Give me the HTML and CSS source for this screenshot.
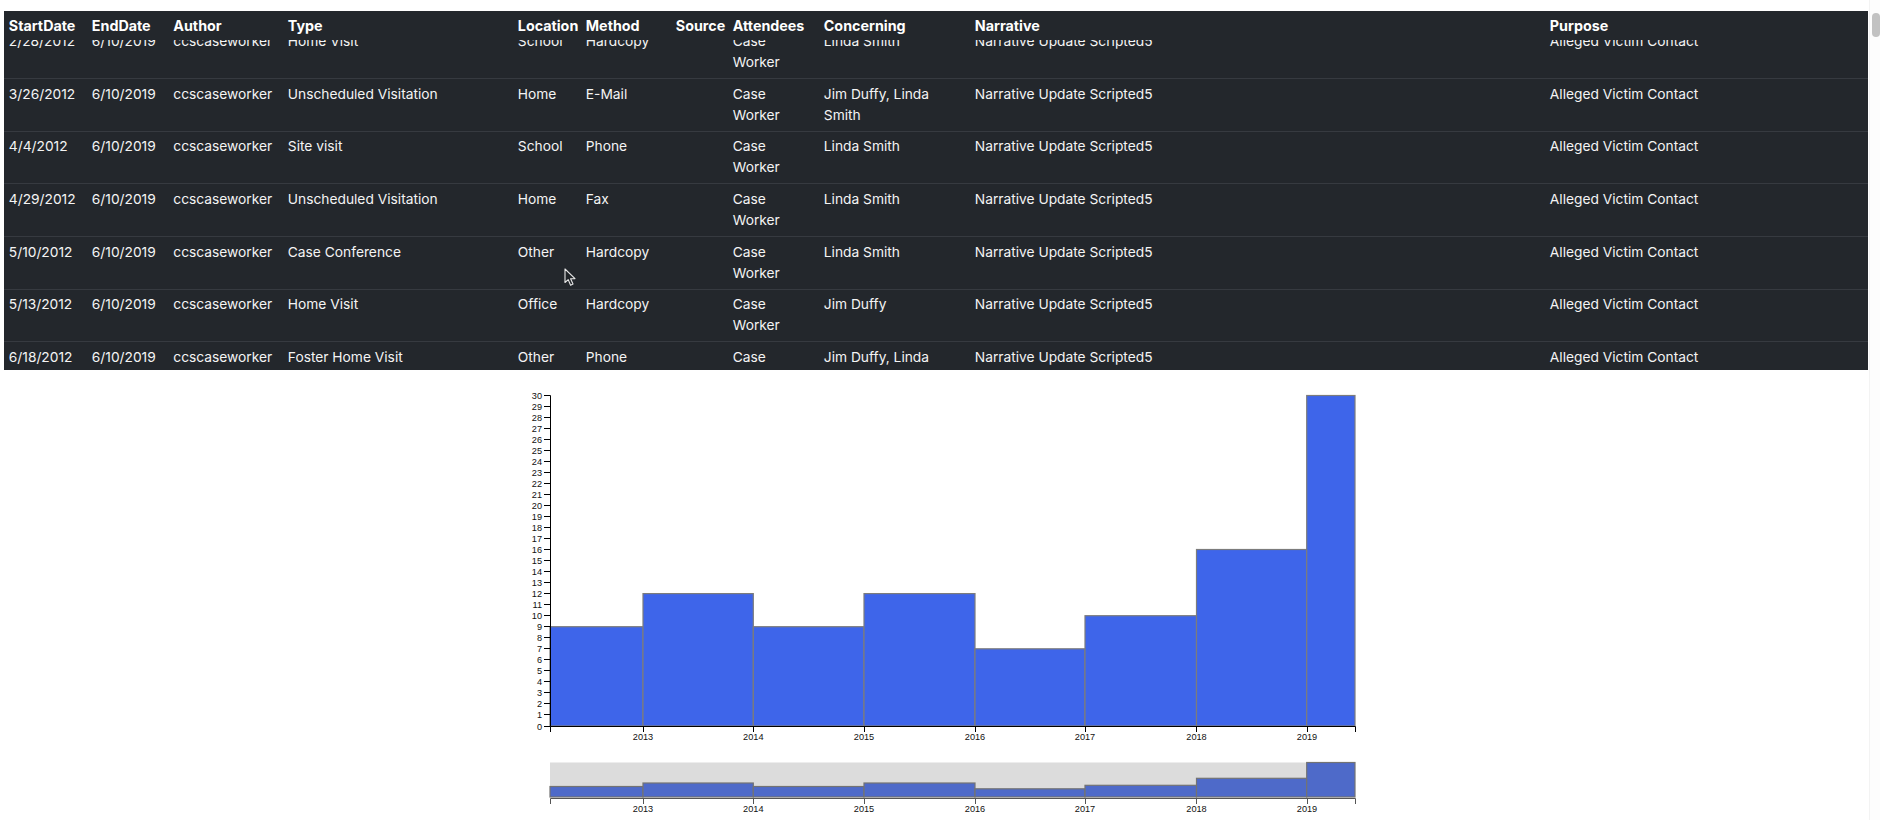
FILE: index.html
```html
<!DOCTYPE html>
<html lang="en">
<head>
<meta charset="utf-8">
<title>Contacts</title>
<link rel="stylesheet" href="styles.css">
</head>
<body>
<div class="scroll-track"><div class="scroll-thumb"></div></div>
<section class="grid-panel">
  <table class="grid head">
    <colgroup><col class="c1"><col class="c2"><col class="c3"><col class="c4"><col class="c5"><col class="c6"><col class="c7"><col class="c8"><col class="c9"><col class="c10"><col class="c11"></colgroup>
    <thead>
      <tr><th>StartDate</th><th>EndDate</th><th>Author</th><th>Type</th><th>Location</th><th>Method</th><th>Source</th><th>Attendees</th><th>Concerning</th><th>Narrative</th><th>Purpose</th></tr>
    </thead>
  </table>
  <div class="viewport">
    <table class="grid body">
      <colgroup><col class="c1"><col class="c2"><col class="c3"><col class="c4"><col class="c5"><col class="c6"><col class="c7"><col class="c8"><col class="c9"><col class="c10"><col class="c11"></colgroup>
      <tbody>
        <tr><td>2/28/2012</td><td>6/10/2019</td><td>ccscaseworker</td><td>Home Visit</td><td>School</td><td>Hardcopy</td><td></td><td>Case Worker</td><td>Linda Smith</td><td>Narrative Update Scripted5</td><td>Alleged Victim Contact</td></tr>
        <tr><td>3/26/2012</td><td>6/10/2019</td><td>ccscaseworker</td><td>Unscheduled Visitation</td><td>Home</td><td>E-Mail</td><td></td><td>Case Worker</td><td>Jim Duffy, Linda Smith</td><td>Narrative Update Scripted5</td><td>Alleged Victim Contact</td></tr>
        <tr><td>4/4/2012</td><td>6/10/2019</td><td>ccscaseworker</td><td>Site visit</td><td>School</td><td>Phone</td><td></td><td>Case Worker</td><td>Linda Smith</td><td>Narrative Update Scripted5</td><td>Alleged Victim Contact</td></tr>
        <tr><td>4/29/2012</td><td>6/10/2019</td><td>ccscaseworker</td><td>Unscheduled Visitation</td><td>Home</td><td>Fax</td><td></td><td>Case Worker</td><td>Linda Smith</td><td>Narrative Update Scripted5</td><td>Alleged Victim Contact</td></tr>
        <tr><td>5/10/2012</td><td>6/10/2019</td><td>ccscaseworker</td><td>Case Conference</td><td>Other</td><td>Hardcopy</td><td></td><td>Case Worker</td><td>Linda Smith</td><td>Narrative Update Scripted5</td><td>Alleged Victim Contact</td></tr>
        <tr><td>5/13/2012</td><td>6/10/2019</td><td>ccscaseworker</td><td>Home Visit</td><td>Office</td><td>Hardcopy</td><td></td><td>Case Worker</td><td>Jim Duffy</td><td>Narrative Update Scripted5</td><td>Alleged Victim Contact</td></tr>
        <tr><td>6/18/2012</td><td>6/10/2019</td><td>ccscaseworker</td><td>Foster Home Visit</td><td>Other</td><td>Phone</td><td></td><td>Case Worker</td><td>Jim Duffy, Linda Smith</td><td>Narrative Update Scripted5</td><td>Alleged Victim Contact</td></tr>
      </tbody>
    </table>
  </div>
  <svg class="cursor" width="13" height="19" viewBox="0 0 13 19" aria-hidden="true">
    <path d="M1 1 L1 14.5 L4.2 11.6 L6.6 17.2 L9 16.1 L6.6 10.8 L11 10.6 Z" fill="#212529" stroke="#e8e8e8" stroke-width="1.1" stroke-linejoin="round"/>
  </svg>
</section>
<section class="chart-area">
  <svg class="chart" width="900" height="450" viewBox="486 370 900 450" role="img" aria-label="Contacts per year">
    <g class="bars">
      <rect x="550" y="626.7" width="93" height="99.3"/>
      <rect x="643" y="593.6" width="110.3" height="132.4"/>
      <rect x="753.3" y="626.7" width="110.7" height="99.3"/>
      <rect x="864" y="593.6" width="111" height="132.4"/>
      <rect x="975" y="648.8" width="110" height="77.2"/>
      <rect x="1085" y="615.7" width="111.5" height="110.3"/>
      <rect x="1196.5" y="549.5" width="110.2" height="176.5"/>
      <rect x="1306.7" y="395.5" width="48.3" height="330.5"/>
    </g>
    <g class="axis">
      <path d="M544 395.5H550.5V726.5H544"/>
      <path d="M544 406.5h6M544 417.5h6M544 428.5h6M544 439.5h6M544 450.5h6M544 461.5h6M544 472.5h6M544 483.5h6M544 494.5h6M544 505.5h6M544 516.5h6M544 527.5h6M544 538.5h6M544 549.5h6M544 560.5h6M544 571.5h6M544 582.5h6M544 593.5h6M544 604.5h6M544 615.5h6M544 626.5h6M544 637.5h6M544 648.5h6M544 659.5h6M544 670.5h6M544 681.5h6M544 692.5h6M544 703.5h6M544 714.5h6"/>
      <path d="M550.5 732V726.5H1355.5V732"/>
      <path d="M643.5 726v6M753.5 726v6M864.5 726v6M975.5 726v6M1085.5 726v6M1196.5 726v6M1307.5 726v6"/>
    </g>
    <g class="ylabels">
      <text x="542" y="398.5">30</text><text x="542" y="409.5">29</text><text x="542" y="420.5">28</text><text x="542" y="431.5">27</text><text x="542" y="442.5">26</text><text x="542" y="453.5">25</text><text x="542" y="464.5">24</text><text x="542" y="475.5">23</text><text x="542" y="486.5">22</text><text x="542" y="497.5">21</text><text x="542" y="508.5">20</text><text x="542" y="519.5">19</text><text x="542" y="530.5">18</text><text x="542" y="541.5">17</text><text x="542" y="552.5">16</text><text x="542" y="563.5">15</text><text x="542" y="574.5">14</text><text x="542" y="585.5">13</text><text x="542" y="596.5">12</text><text x="542" y="607.5">11</text><text x="542" y="618.5">10</text><text x="542" y="629.5">9</text><text x="542" y="640.5">8</text><text x="542" y="651.5">7</text><text x="542" y="662.5">6</text><text x="542" y="673.5">5</text><text x="542" y="684.5">4</text><text x="542" y="695.5">3</text><text x="542" y="706.5">2</text><text x="542" y="717.5">1</text><text x="542" y="729.5">0</text>
    </g>
    <g class="xlabels">
      <text x="643" y="740">2013</text><text x="753.3" y="740">2014</text><text x="864" y="740">2015</text><text x="975" y="740">2016</text><text x="1085" y="740">2017</text><text x="1196.5" y="740">2018</text><text x="1307" y="740">2019</text>
    </g>
    <rect class="brush" x="550" y="762.5" width="805" height="34.5"/>
    <g class="bars mini">
      <rect x="550" y="786.5" width="93" height="10.5"/>
      <rect x="643" y="783" width="110.3" height="14"/>
      <rect x="753.3" y="786.5" width="110.7" height="10.5"/>
      <rect x="864" y="783" width="111" height="14"/>
      <rect x="975" y="788.8" width="110" height="8.2"/>
      <rect x="1085" y="785.3" width="111.5" height="11.7"/>
      <rect x="1196.5" y="778.3" width="110.2" height="18.7"/>
      <rect x="1306.7" y="762.5" width="48.3" height="34.5"/>
    </g>
    <g class="axis soft">
      <path d="M550.5 804V798.5H1355.5V804"/>
      <path d="M643.5 798v6M753.5 798v6M864.5 798v6M975.5 798v6M1085.5 798v6M1196.5 798v6M1307.5 798v6"/>
    </g>
    <g class="xlabels">
      <text x="643" y="812">2013</text><text x="753.3" y="812">2014</text><text x="864" y="812">2015</text><text x="975" y="812">2016</text><text x="1085" y="812">2017</text><text x="1196.5" y="812">2018</text><text x="1307" y="812">2019</text>
    </g>
  </svg>
</section>
</body>
</html>
```

FILE: styles.css
```css
html, body {
  margin: 0;
  height: 820px;
  overflow: hidden;
  background: #fff;
}

body {
  padding: 11px 12px 0 4px;
  box-sizing: border-box;
  font-family: Inter, "Liberation Sans", sans-serif;
  font-size: 13.77px;
  line-height: 21px;
  color: #fff;
}

.scroll-track {
  position: fixed;
  top: 0;
  right: 0;
  bottom: 0;
  width: 11px;
  box-sizing: border-box;
  background: #fdfdfd;
  border-left: 1px solid #f3f3f3;
}

.scroll-thumb {
  position: absolute;
  top: 13px;
  right: 0;
  width: 8px;
  height: 24px;
  border-radius: 4px;
  background: #c2c2c2;
}

.grid-panel {
  position: relative;
  background: #23272c;
  height: 359px;
  overflow: hidden;
}

.grid {
  width: 1864px;
  table-layout: fixed;
  border-collapse: collapse;
  background: #23272c;
}

.c1 { width: 83px; }
.c2 { width: 81.5px; }
.c3 { width: 114.5px; }
.c4 { width: 230px; }
.c5 { width: 68px; }
.c6 { width: 90px; }
.c7 { width: 57px; }
.c8 { width: 91px; }
.c9 { width: 151px; }
.c10 { width: 575px; }
.c11 { width: 323px; }

.grid th {
  padding: 4.4px 4.8px 3.6px;
  height: 29px;
  box-sizing: border-box;
  text-align: left;
  font-size: 14.3px;
  font-weight: 700;
  white-space: nowrap;
  overflow: visible;
}

.grid td {
  padding: 4.6px 4.8px 5px;
  vertical-align: top;
  border-top: 1px solid #363a40;
  font-weight: 400;
  overflow-wrap: break-word;
  color: #f4f4f4;
}

.viewport {
  height: 330px;
  overflow: hidden;
}

.body {
  margin-top: -14.3px;
}

.cursor {
  position: absolute;
  left: 560px;
  top: 257px;
}

.chart-area {
  display: flex;
  justify-content: center;
}

.chart {
  display: block;
  flex: none;
}

.bars rect {
  fill: #3e65ea;
  stroke: #7c7c7c;
  stroke-width: 1.2;
}

.bars.mini rect {
  fill: #4e6ac9;
  stroke: #737373;
}

.brush {
  fill: #dcdcdc;
}

.axis path {
  fill: none;
  stroke: #000;
  stroke-width: 1;
}

.axis.soft path {
  stroke: #555;
}

.ylabels text,
.xlabels text {
  font-family: "Liberation Sans", Arial, sans-serif;
  font-size: 9.2px;
  fill: #111;
}

.ylabels text {
  text-anchor: end;
}

.xlabels text {
  text-anchor: middle;
}
```
